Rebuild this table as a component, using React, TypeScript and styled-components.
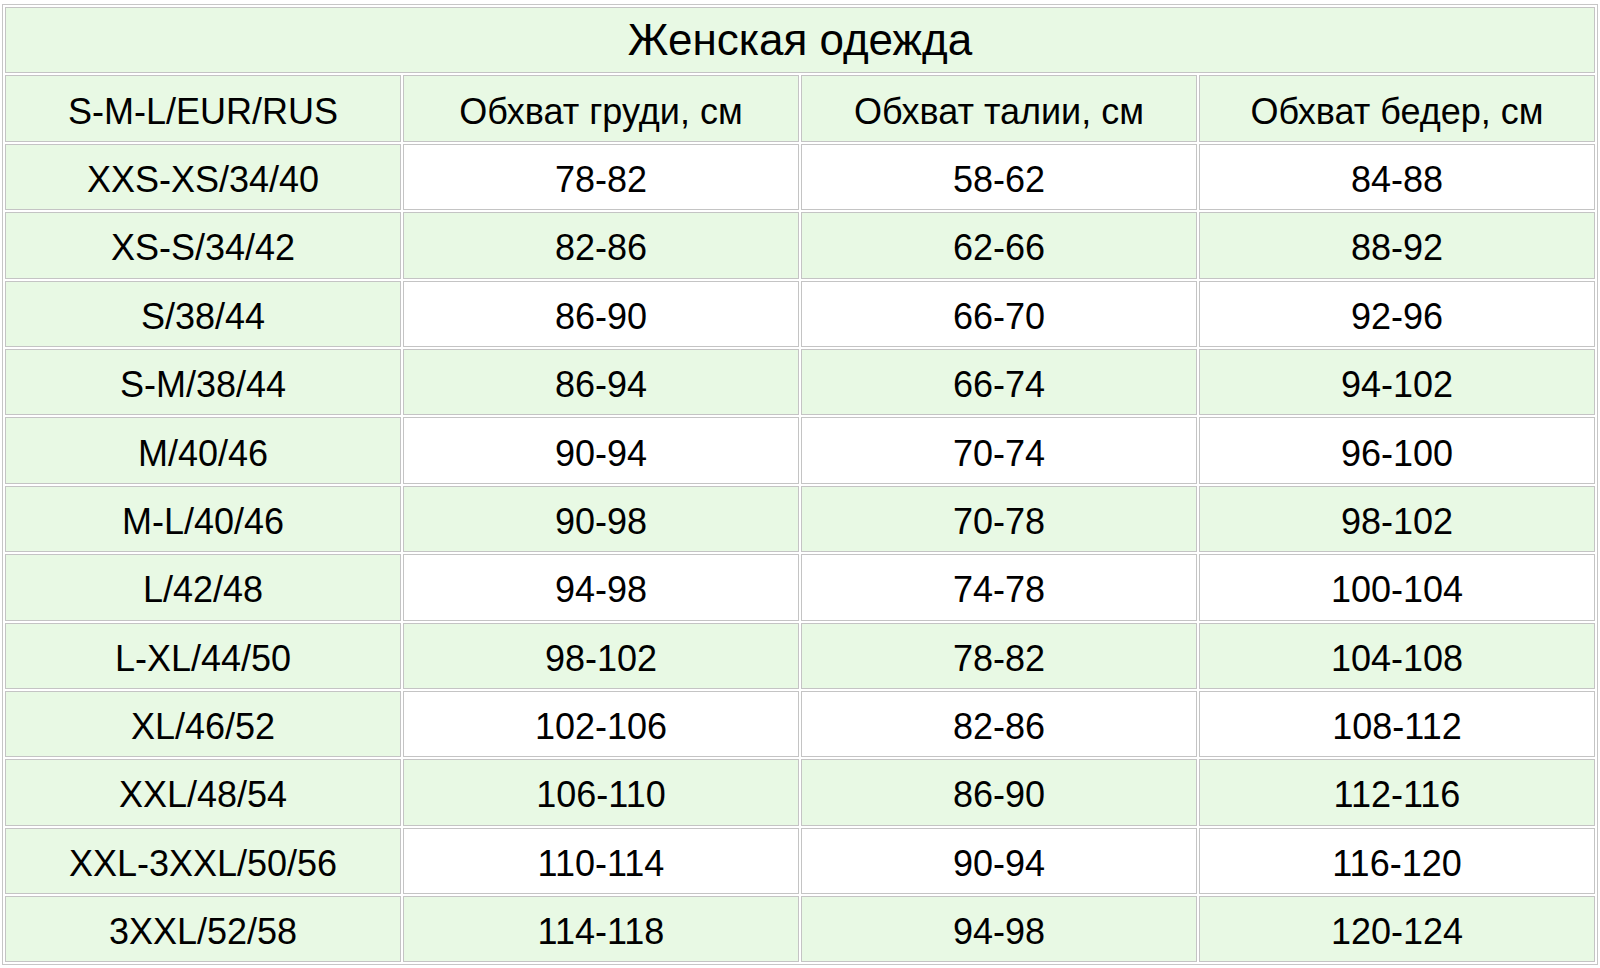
import styled, { createGlobalStyle } from "styled-components";

const GlobalStyle = createGlobalStyle`
  html, body {
    margin: 0;
    padding: 0;
    background: #ffffff;
  }
`;

const Page = styled.div`
  padding: 4px 2px 0 2px;
  font-family: "Liberation Sans", Arial, sans-serif;
`;

const Table = styled.table`
  width: 1596px;
  border-collapse: separate;
  border-spacing: 2px;
  border: 1px solid #c6c6c6;
  table-layout: fixed;
`;

const Row = styled.tr`
  height: 66.4px;
`;

const Title = styled.th`
  background-color: #e8f9e4;
  border: 1px solid #c4c4c4;
  font-size: 44px;
  font-weight: normal;
  color: #000;
  text-align: center;
  padding: 0;
`;

const Cell = styled.td<{ $green: boolean }>`
  background-color: ${(p) => (p.$green ? "#e8f9e4" : "#ffffff")};
  border: 1px solid #c4c4c4;
  font-size: 36px;
  color: #000;
  text-align: center;
  vertical-align: middle;
  padding: 6px 0 0 0;
`;

const head = ["S-M-L/EUR/RUS", "Обхват груди, см", "Обхват талии, см", "Обхват бедер, см"];

const rows = [
  ["XXS-XS/34/40", "78-82", "58-62", "84-88"],
  ["XS-S/34/42", "82-86", "62-66", "88-92"],
  ["S/38/44", "86-90", "66-70", "92-96"],
  ["S-M/38/44", "86-94", "66-74", "94-102"],
  ["M/40/46", "90-94", "70-74", "96-100"],
  ["M-L/40/46", "90-98", "70-78", "98-102"],
  ["L/42/48", "94-98", "74-78", "100-104"],
  ["L-XL/44/50", "98-102", "78-82", "104-108"],
  ["XL/46/52", "102-106", "82-86", "108-112"],
  ["XXL/48/54", "106-110", "86-90", "112-116"],
  ["XXL-3XXL/50/56", "110-114", "90-94", "116-120"],
  ["3XXL/52/58", "114-118", "94-98", "120-124"],
];

export default function App() {
  return (
    <>
      <GlobalStyle />
      <Page>
        <Table>
          <tbody>
            <Row>
              <Title colSpan={4}>Женская одежда</Title>
            </Row>
            <Row>
              {head.map((h) => (
                <Cell key={h} $green>
                  {h}
                </Cell>
              ))}
            </Row>
            {rows.map((r, i) => (
              <Row key={r[0]}>
                {r.map((c, j) => (
                  <Cell key={j} $green={j === 0 || i % 2 === 1}>
                    {c}
                  </Cell>
                ))}
              </Row>
            ))}
          </tbody>
        </Table>
      </Page>
    </>
  );
}
